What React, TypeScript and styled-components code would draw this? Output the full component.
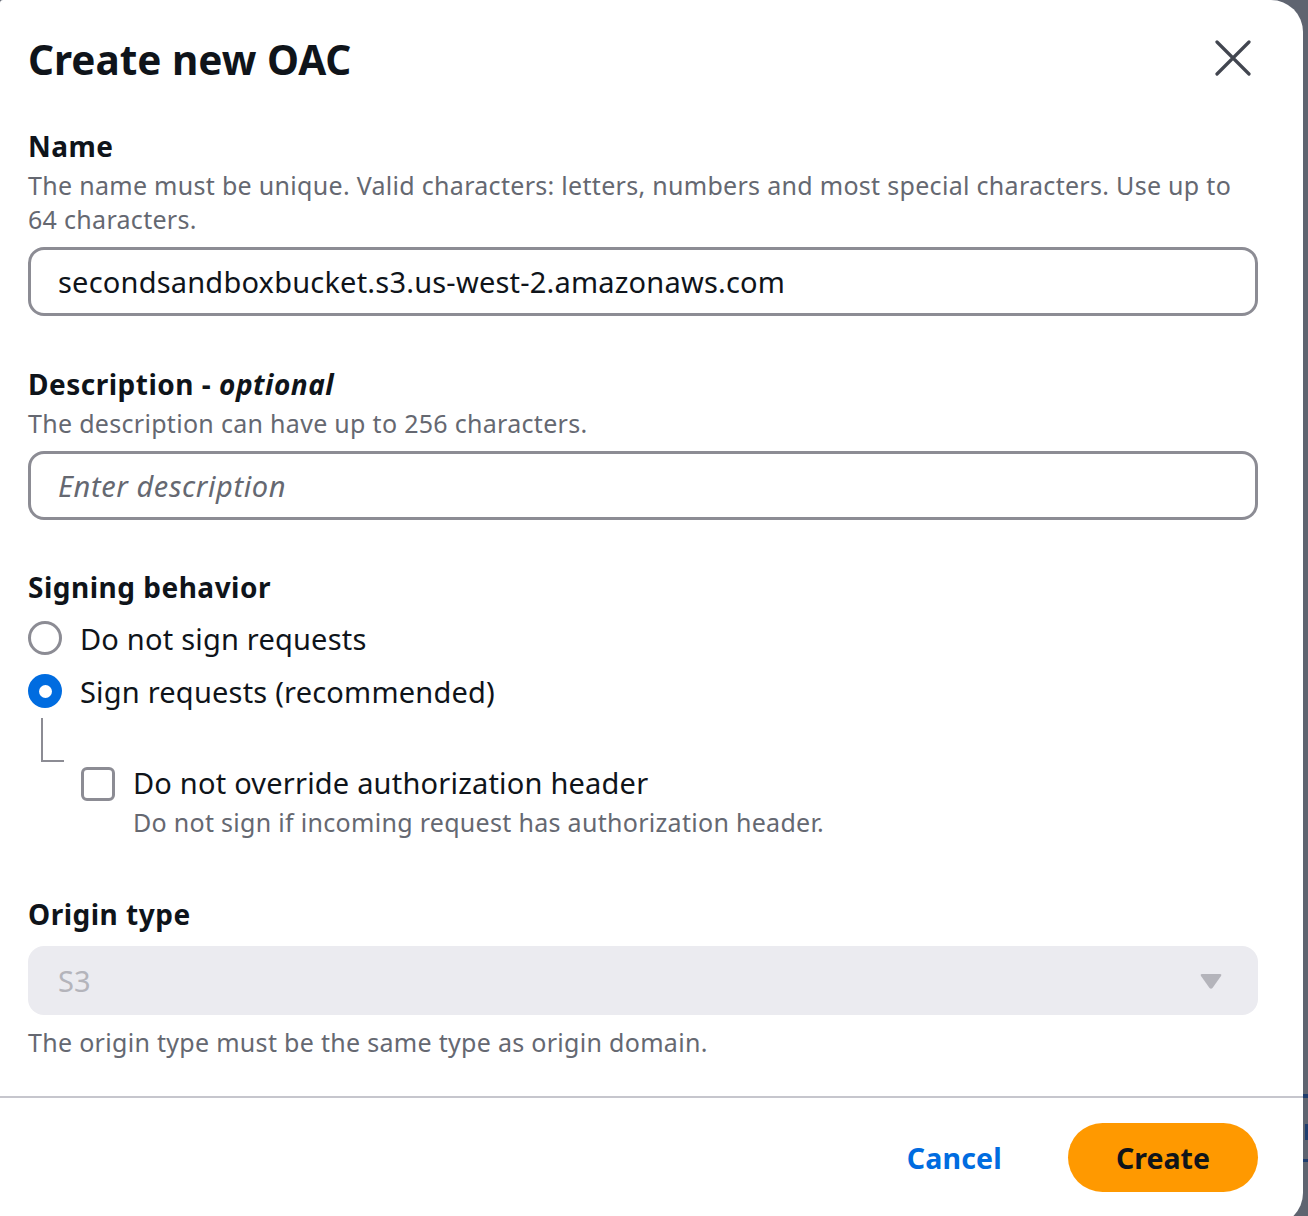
import React from "react";
import styled, { createGlobalStyle } from "styled-components";

const GlobalStyle = createGlobalStyle`
  html, body {
    margin: 0;
    padding: 0;
    background: #5f6470;
    overflow: hidden;
  }
  body {
    font-family: "Noto Sans", "Open Sans", sans-serif;
    color: #0f141a;
  }
  * { box-sizing: border-box; }
`;

const Backdrop = styled.div`
  position: relative;
  width: 1308px;
  height: 1216px;
  overflow: hidden;
`;

const BackdropMark = styled.div<{ $top: number; $h: number; $w: number }>`
  position: absolute;
  right: 0;
  top: ${(p) => p.$top}px;
  width: ${(p) => p.$w}px;
  height: ${(p) => p.$h}px;
  background: #1f3d6e;
`;

const Modal = styled.div`
  position: relative;
  width: 1303px;
  height: 1225px;
  background: #ffffff;
  border-radius: 3px 32px 32px 3px;
  display: flex;
  flex-direction: column;
`;

const Header = styled.div`
  display: flex;
  align-items: center;
  justify-content: space-between;
  padding: 34px 45px 0 28px;
`;

const Title = styled.h2`
  margin: 0;
  font-size: 40.5px;
  line-height: 52px;
  font-weight: 700;
  color: #0f141a;
`;

const CloseButton = styled.button`
  border: none;
  background: none;
  padding: 0;
  width: 40px;
  height: 40px;
  display: flex;
  align-items: center;
  justify-content: center;
  margin-right: 5px;
  margin-top: -4px;
  cursor: pointer;
`;

const Content = styled.div`
  padding: 43px 45px 0 28px;
  display: flex;
  flex-direction: column;
`;

const Field = styled.div<{ $mt?: number }>`
  display: flex;
  flex-direction: column;
  margin-top: ${(p) => p.$mt ?? 0}px;
`;

const Label = styled.div`
  font-size: 28px;
  line-height: 34px;
  font-weight: 700;
  letter-spacing: 0.5px;
  color: #0f141a;
`;

const Optional = styled.i`
  font-weight: 700;
  font-style: italic;
`;

const Hint = styled.div<{ $mt?: number }>`
  font-size: 25px;
  line-height: 34px;
  letter-spacing: 0.3px;
  color: #656871;
  margin-top: ${(p) => p.$mt ?? 5}px;
`;

const InputBox = styled.div<{ $mt?: number }>`
  margin-top: ${(p) => p.$mt ?? 11}px;
  height: 69px;
  flex: none;
  border: 3px solid #8c8c94;
  border-radius: 16px;
  display: flex;
  align-items: center;
  padding: 0 27px;
  font-size: 29px;
  letter-spacing: 0.2px;
  color: #0f141a;
`;

const Placeholder = styled.span`
  font-style: italic;
  color: #656871;
  letter-spacing: 0.6px;
`;

const RadioGroup = styled.div`
  display: flex;
  flex-direction: column;
  gap: 13px;
  margin-top: 14px;
`;

const RadioRow = styled.label`
  display: flex;
  align-items: center;
  gap: 18px;
  height: 40px;
  font-size: 29px;
  letter-spacing: 0.2px;
  color: #0f141a;
`;

const RadioCircle = styled.span<{ $checked?: boolean }>`
  width: 34px;
  height: 34px;
  border-radius: 50%;
  flex: none;
  display: flex;
  align-items: center;
  justify-content: center;
  border: ${(p) => (p.$checked ? "none" : "3px solid #8c8c94")};
  background: ${(p) => (p.$checked ? "#006ce0" : "#ffffff")};
  &::after {
    content: "";
    display: ${(p) => (p.$checked ? "block" : "none")};
    width: 13px;
    height: 13px;
    border-radius: 50%;
    background: #ffffff;
  }
`;

const Connector = styled.div`
  margin: 7px 0 0 13px;
  width: 23px;
  height: 44px;
  border-left: 2px solid #8c8c94;
  border-bottom: 2px solid #8c8c94;
`;

const CheckRow = styled.div`
  display: flex;
  gap: 18px;
  margin: 4px 0 0 53px;
`;

const CheckBox = styled.span`
  width: 34px;
  height: 34px;
  border: 3px solid #8c8c94;
  border-radius: 6px;
  flex: none;
  margin-top: 1px;
`;

const CheckText = styled.div`
  display: flex;
  flex-direction: column;
`;

const CheckLabel = styled.div`
  font-size: 29px;
  line-height: 34px;
  letter-spacing: 0.2px;
  color: #0f141a;
`;

const SelectBox = styled.div`
  margin-top: 15px;
  height: 69px;
  flex: none;
  border-radius: 16px;
  background: #ebebf0;
  display: flex;
  align-items: center;
  justify-content: space-between;
  padding: 0 35px 0 30px;
  font-size: 29px;
  color: #b4b4bb;
`;

const Divider = styled.div`
  margin-top: 37px;
  height: 2px;
  flex: none;
  background: #c6c6cd;
`;

const Footer = styled.div`
  display: flex;
  justify-content: flex-end;
  align-items: center;
  gap: 36px;
  padding: 25px 45px 0 28px;
`;

const LinkButton = styled.button`
  border: none;
  background: none;
  font-family: inherit;
  font-size: 28.5px;
  font-weight: 700;
  letter-spacing: 0.2px;
  color: #006ce0;
  padding: 0 30px;
  height: 69px;
  cursor: pointer;
`;

const PrimaryButton = styled.button`
  border: none;
  background: #ff9900;
  font-family: inherit;
  font-size: 28.5px;
  font-weight: 700;
  color: #0f141a;
  width: 190px;
  height: 69px;
  border-radius: 35px;
  cursor: pointer;
`;

export default function App() {
  return (
    <>
      <GlobalStyle />
      <Backdrop>
        <BackdropMark $top={1094} $h={4} $w={5} />
        <BackdropMark $top={1124} $h={16} $w={3} />
        <BackdropMark $top={1159} $h={3} $w={5} />
        <Modal>
          <Header>
            <Title>Create new OAC</Title>
            <CloseButton aria-label="Close">
              <svg width="36" height="36" viewBox="0 0 36 36">
                <path
                  d="M2 2 L34 34 M34 2 L2 34"
                  stroke="#424650"
                  strokeWidth="3.2"
                  strokeLinecap="round"
                  fill="none"
                />
              </svg>
            </CloseButton>
          </Header>
          <Content>
            <Field>
              <Label>Name</Label>
              <Hint>
                The name must be unique. Valid characters: letters, numbers and most special characters. Use up to
                64 characters.
              </Hint>
              <InputBox>secondsandboxbucket.s3.us-west-2.amazonaws.com</InputBox>
            </Field>
            <Field $mt={51}>
              <Label>
                Description - <Optional>optional</Optional>
              </Label>
              <Hint>The description can have up to 256 characters.</Hint>
              <InputBox>
                <Placeholder>Enter description</Placeholder>
              </InputBox>
            </Field>
            <Field $mt={50}>
              <Label>Signing behavior</Label>
              <RadioGroup>
                <RadioRow>
                  <RadioCircle />
                  Do not sign requests
                </RadioRow>
                <RadioRow>
                  <RadioCircle $checked />
                  Sign requests (recommended)
                </RadioRow>
              </RadioGroup>
              <Connector />
              <CheckRow>
                <CheckBox />
                <CheckText>
                  <CheckLabel>Do not override authorization header</CheckLabel>
                  <Hint $mt={5}>Do not sign if incoming request has authorization header.</Hint>
                </CheckText>
              </CheckRow>
            </Field>
            <Field $mt={58}>
              <Label>Origin type</Label>
              <SelectBox>
                <span>S3</span>
                <svg width="24" height="18" viewBox="0 0 24 18">
                  <path
                    d="M3 2 H21 Q23 2 22 4 L13.5 16 Q12 17.5 10.5 16 L2 4 Q1 2 3 2 Z"
                    fill="#b4b4bb"
                  />
                </svg>
              </SelectBox>
              <Hint $mt={10}>The origin type must be the same type as origin domain.</Hint>
            </Field>
          </Content>
          <Divider />
          <Footer>
            <LinkButton>Cancel</LinkButton>
            <PrimaryButton>Create</PrimaryButton>
          </Footer>
        </Modal>
      </Backdrop>
    </>
  );
}
